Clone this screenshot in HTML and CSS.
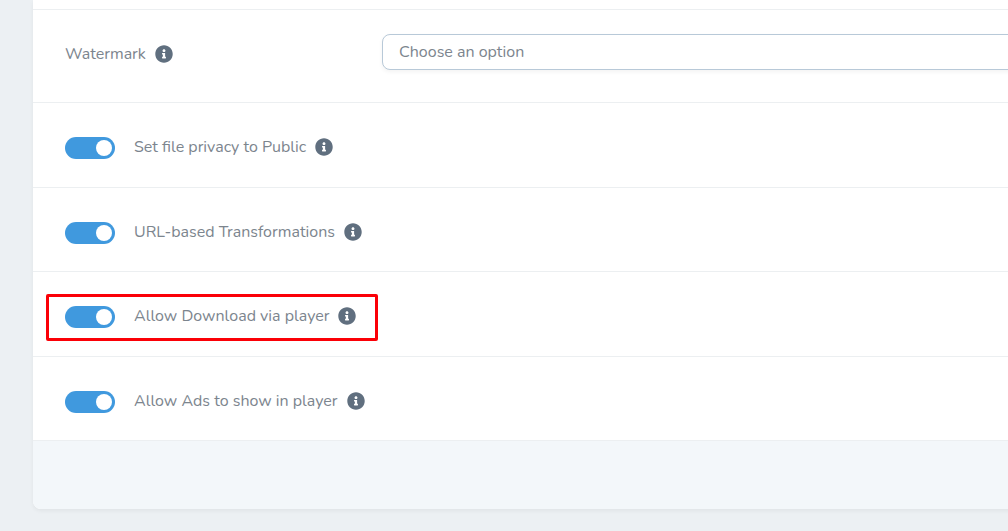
FILE: index.html
```html
<!DOCTYPE html>
<html lang="en">
<head>
    <meta charset="UTF-8">
    <meta name="viewport" content="width=device-width, initial-scale=1.0">
    <title>Settings</title>
    <link rel="stylesheet" href="styles.css">
</head>
<body>
    <svg class="sprite" aria-hidden="true">
        <symbol id="info" viewBox="0 0 512 512">
            <path d="M256 8C119 8 8 119 8 256s111 248 248 248 248-111 248-248S393 8 256 8zm0 110c23.200 0 42 18.800 42 42s-18.800 42-42 42-42-18.800-42-42 18.800-42 42-42zm56 254c0 6.600-5.400 12-12 12h-88c-6.600 0-12-5.400-12-12v-24c0-6.600 5.400-12 12-12h12v-64h-12c-6.600 0-12-5.400-12-12v-24c0-6.600 5.400-12 12-12h64c6.600 0 12 5.400 12 12v100h12c6.600 0 12 5.400 12 12v24z"/>
        </symbol>
    </svg>

    <form class="card">
        <div class="card-top"></div>

        <div class="field">
            <label class="field-label" for="watermark">
                Watermark
                <svg class="info"><use href="#info"/></svg>
            </label>
            <select id="watermark">
                <option>Choose an option</option>
            </select>
        </div>

        <div class="toggles">
            <div class="toggle-row">
                <input type="checkbox" class="switch" id="privacy" checked>
                <label for="privacy">Set file privacy to Public</label>
                <svg class="info"><use href="#info"/></svg>
            </div>
            <div class="toggle-row">
                <input type="checkbox" class="switch" id="transformations" checked>
                <label for="transformations">URL-based Transformations</label>
                <svg class="info"><use href="#info"/></svg>
            </div>
            <div class="toggle-row highlighted">
                <input type="checkbox" class="switch" id="download" checked>
                <label for="download">Allow Download via player</label>
                <svg class="info"><use href="#info"/></svg>
            </div>
            <div class="toggle-row">
                <input type="checkbox" class="switch" id="ads" checked>
                <label for="ads">Allow Ads to show in player</label>
                <svg class="info"><use href="#info"/></svg>
            </div>
        </div>

        <div class="card-footer"></div>
    </form>
</body>
</html>
```
FILE: styles.css
```css
:root {
    --page-bg: #ecf0f3;
    --footer-bg: #f3f7fa;
    --line: #eceff1;
    --text: #7c858e;
    --icon: #606f7f;
    --switch: #4099de;
    --input-border: #b8c9d8;
    --highlight: #fb0007;
}

*,
*::before,
*::after {
    box-sizing: border-box;
}

body {
    margin: 0;
    background: var(--page-bg);
    color: var(--text);
    font: 16px/24px Nunito, Lato, sans-serif;
    overflow: hidden;
}

.sprite {
    position: absolute;
    width: 0;
    height: 0;
}

/* the card runs past the right edge of the window */
.card {
    margin: 0 -32px 22px 33px;
    background: white;
    border-radius: 0 0 8px 8px;
    box-shadow: 0 2px 4px rgba(0, 0, 0, 0.05);
    overflow: hidden;
}

.card-top {
    height: 10px;
    border-bottom: 1px solid var(--line);
}

.field {
    display: flex;
    align-items: flex-start;
    padding: 24px 0 32px 32px;
    border-bottom: 1px solid var(--line);
}

.field-label {
    display: flex;
    align-items: center;
    gap: 9px;
    flex: 0 0 317px;
    padding-top: 8px;
}

.info {
    flex: none;
    width: 18px;
    height: 18px;
    fill: var(--icon);
}

select {
    flex: 1;
    height: 36px;
    padding: 0 16px;
    appearance: none;
    background: white;
    border: 1px solid var(--input-border);
    border-radius: 8px;
    box-shadow: 0 2px 4px rgba(0, 0, 0, 0.05);
    color: inherit;
    font: inherit;
}

.toggles {
    display: grid;
    grid-auto-rows: 1fr;
    min-height: 338px;
}

.toggle-row {
    position: relative;
    display: flex;
    align-items: center;
    gap: 9px;
    padding: 7px 32px 0;
    border-bottom: 1px solid var(--line);
}

.toggle-row label,
.toggle-row .info {
    margin-bottom: 2px;
}

.switch {
    appearance: none;
    flex: none;
    width: 50px;
    height: 22px;
    margin: 0 10px 0 0;
    padding: 3px;
    border-radius: 11px;
    background: #cbd5de;
}

.switch::before {
    content: "";
    display: block;
    width: 16px;
    height: 16px;
    border-radius: 50%;
    background: white;
}

.switch:checked {
    background: var(--switch);
}

.switch:checked::before {
    margin-left: auto;
}

.highlighted::after {
    content: "";
    position: absolute;
    top: 22px;
    left: 13px;
    width: 332px;
    height: 47px;
    border: 3px solid var(--highlight);
    border-radius: 2px;
    pointer-events: none;
}

.card-footer {
    height: 68px;
    background: var(--footer-bg);
}
```
